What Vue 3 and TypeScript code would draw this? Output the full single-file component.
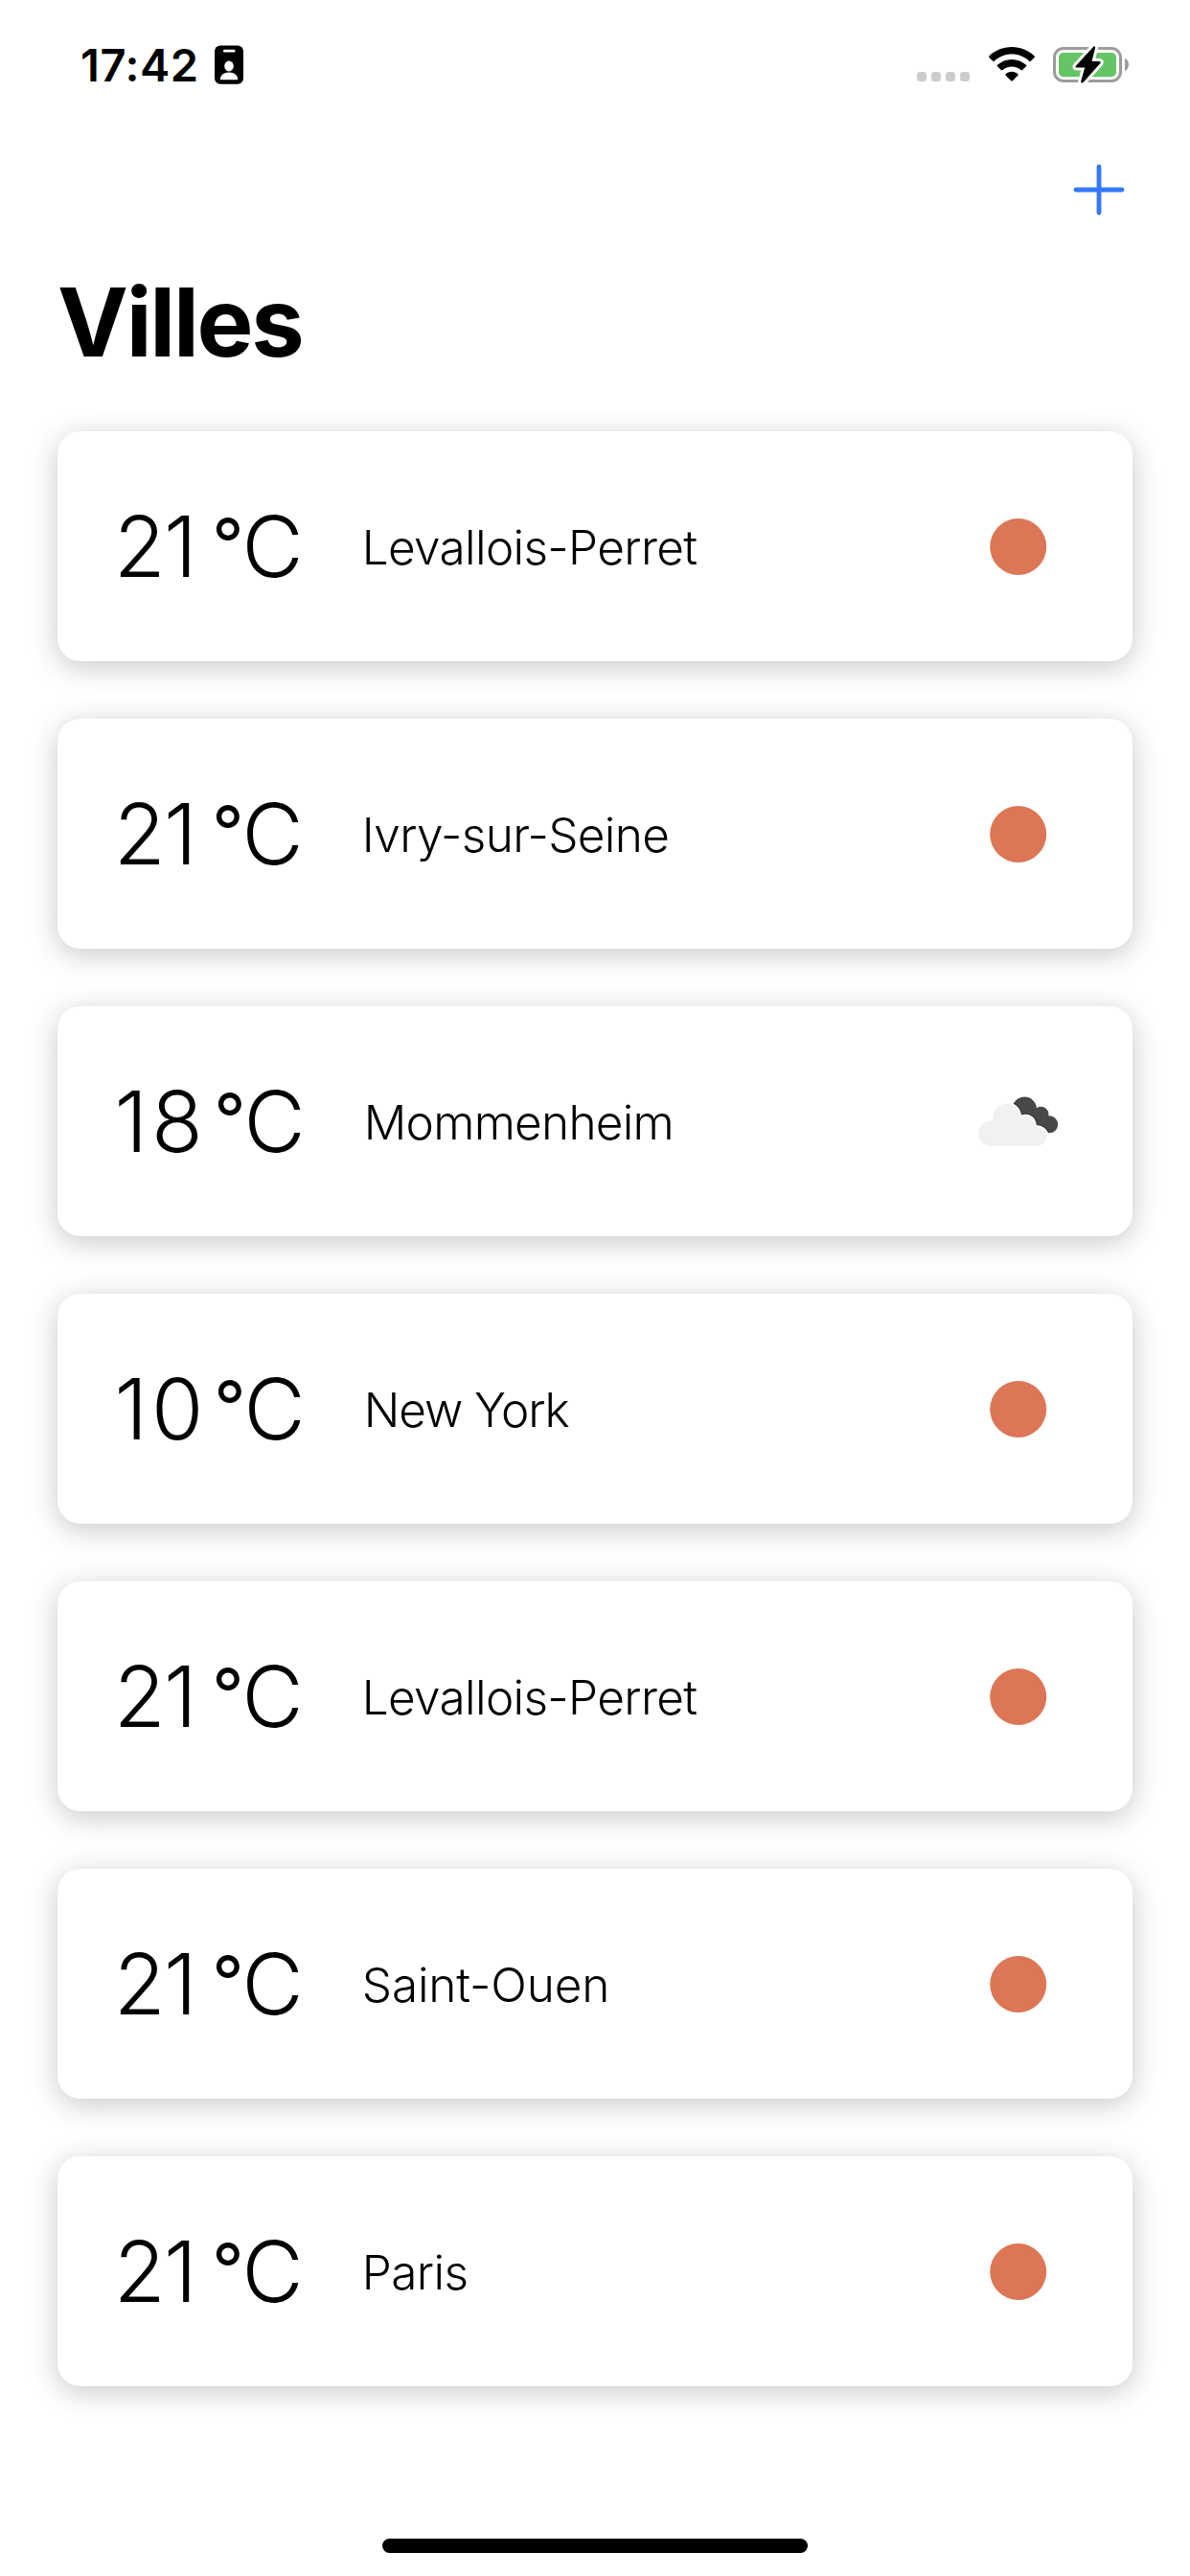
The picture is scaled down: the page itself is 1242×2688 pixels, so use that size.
<script setup lang="ts">
type Sky = 'clear' | 'clouds'

interface City {
  temp: number
  name: string
  sky: Sky
  tracking: number
}

const cities: City[] = [
  { temp: 21, name: 'Levallois-Perret', sky: 'clear', tracking: -0.66 },
  { temp: 21, name: 'Ivry-sur-Seine', sky: 'clear', tracking: -0.64 },
  { temp: 18, name: 'Mommenheim', sky: 'clouds', tracking: -0.75 },
  { temp: 10, name: 'New York', sky: 'clear', tracking: -1.1 },
  { temp: 21, name: 'Levallois-Perret', sky: 'clear', tracking: -0.66 },
  { temp: 21, name: 'Saint-Ouen', sky: 'clear', tracking: -0.15 },
  { temp: 21, name: 'Paris', sky: 'clear', tracking: -0.6 },
]

const cloud =
  'M32 85.8A13 13 0 0 1 32 59.7Q33.3 59.6 34.1 59.8C32.9 50 39.5 41.7 48.3 41.7C56 41.7 62 47.4 62.7 56C69.5 52.2 77.6 56 78 64.6V66C84.5 65.2 90.5 69.5 90.5 75.6C90.5 81.5 86 85.8 80.5 85.8Z'
</script>

<template>
  <div class="screen">
    <header class="status">
      <span class="time">17:42</span>
      <svg class="badge" width="30" height="41" viewBox="0 0 30 41">
        <rect y=".5" width="30" height="40.200" rx="6" />
        <rect x="9" y="4.800" width="12.400" height="2.800" rx="1.400" fill="#fff" />
        <ellipse cx="15" cy="22" rx="4.800" ry="5.400" fill="#fff" />
        <path d="M5.800 36.300C5.800 31.500 9.500 28.600 15 28.600S24.200 31.500 24.200 36.300Z" fill="#fff" />
      </svg>
      <div class="signal"><i /><i /><i /><i /></div>
      <svg class="wifi" width="48" height="36" viewBox="0 0 48 36">
        <path d="M24 0C33.200 0 41.600 3.600 47.600 9.400Q48.300 10.200 47.600 10.900L43.800 14.700Q43 15.400 42.200 14.700C37.500 10.200 31 7.500 24 7.500S10.500 10.200 5.800 14.700Q5 15.400 4.200 14.700L.4 10.900Q-.3 10.200 .4 9.400C6.400 3.600 14.800 0 24 0Z" />
        <path d="M24 12.900C29.700 12.900 35 15.100 39 18.700Q39.800 19.500 39 20.300L35.100 24.100Q34.300 24.800 33.500 24.100C30.900 21.800 27.600 20.500 24 20.500S17.100 21.800 14.500 24.100Q13.700 24.800 12.900 24.100L9 20.300Q8.200 19.500 9 18.700C13 15.100 18.300 12.900 24 12.900Z" />
        <path d="M24 25.800C26.500 25.800 28.800 26.700 30.500 28.200Q31.200 28.900 30.500 29.600L24.800 35.200Q24 36 23.200 35.200L17.500 29.600Q16.800 28.900 17.500 28.200C19.200 26.700 21.500 25.800 24 25.800Z" />
      </svg>
      <svg class="battery" width="80" height="41" viewBox="0 0 80 41">
        <rect x="1.500" y="3.500" width="69" height="34" rx="9.500" fill="none" stroke="#9c9c9c" stroke-width="3" />
        <rect x="6" y="8" width="60" height="25.300" rx="5" fill="#65c466" />
        <path d="M75 14C77.800 15.200 79 17.600 79 20.500S77.800 25.800 75 27Z" fill="#9c9c9c" />
        <path d="M42.200 1.700L23.800 21.800Q22.800 23.400 24.700 23.400H33.200L29.100 38.200Q29.500 40.400 31.600 38.900L49.400 18.900Q50.300 17 48.400 17H40.500L44.200 2.800Q44 .2 42.200 1.700Z" stroke="#fff" stroke-width="6" stroke-linejoin="round" paint-order="stroke" />
      </svg>
    </header>

    <nav class="toolbar">
      <svg width="54" height="54" viewBox="0 0 54 54">
        <path d="M27 3V51M3 27H51" stroke="#3478f6" stroke-width="4.800" stroke-linecap="round" />
      </svg>
    </nav>

    <h1 class="title">Villes</h1>

    <main class="list">
      <article v-for="(city, i) in cities" :key="i" class="card">
        <div class="temp">
          <span class="value" :class="{ teen: city.temp < 20 }">{{ city.temp }}</span>
          <span class="degree">°</span>
          <span class="unit">C</span>
        </div>
        <span class="name" :style="{ letterSpacing: city.tracking + 'px' }">{{ city.name }}</span>
        <svg class="icon" width="120" height="120" viewBox="0 0 120 120">
          <circle v-if="city.sky === 'clear'" cx="60.700" cy="60.500" r="29.500" fill="#dc7656" />
          <template v-else>
            <clipPath id="dark-cloud">
              <circle cx="67.300" cy="47.300" r="12.700" />
              <circle cx="84.500" cy="52.600" r="7.900" />
              <circle cx="93.200" cy="63.300" r="9" />
              <path d="M62 50L79 46L92 54L94 72L84 70Z" />
            </clipPath>
            <g clip-path="url(#dark-cloud)">
              <rect width="120" height="120" fill="#48484a" />
              <path :d="cloud" fill="none" stroke="#343436" stroke-width="6" />
            </g>
            <path :d="cloud" fill="#f1f1f1" stroke="#fff" stroke-width="3.600" paint-order="stroke" />
          </template>
        </svg>
      </article>
    </main>

    <div class="home-bar" />
  </div>
</template>

<style>
body {
  margin: 0;
  background: #fff;
}
</style>

<style scoped>
.screen {
  box-sizing: border-box;
  width: 1242px;
  height: 2688px;
  display: flex;
  flex-direction: column;
  overflow: hidden;
  background: #fff;
  color: #000;
  font-family: Inter, 'Liberation Sans', sans-serif;
}

.status {
  height: 132px;
  display: flex;
  align-items: flex-start;
  flex: none;
}

.time {
  margin: 44px 0 0 84px;
  width: 140px;
  font-size: 47px;
  line-height: 48px;
  font-weight: 600;
  letter-spacing: 0.55px;
  white-space: nowrap;
}

.badge {
  margin-top: 47px;
}

.signal {
  display: flex;
  gap: 5px;
  margin: 75px 0 0 703px;
}

.signal i {
  width: 10px;
  height: 10px;
  border-radius: 3.5px;
  background: #ccc;
}

.wifi {
  margin: 49px 0 0 19.5px;
}

.battery {
  margin: 47px 0 0 19.5px;
}

.toolbar {
  height: 132px;
  box-sizing: border-box;
  padding: 38.5px 68px 0 0;
  display: flex;
  justify-content: flex-end;
  align-items: flex-start;
  flex: none;
}

.title {
  margin: 0;
  padding: 12px 0 0 60px;
  height: 174px;
  font-size: 99px;
  line-height: 120px;
  font-weight: 700;
  letter-spacing: -2.2px;
}

.list {
  display: flex;
  flex-direction: column;
  gap: 60px;
  padding: 0 60px;
}

.card {
  height: 240px;
  box-sizing: border-box;
  padding: 0 60px;
  display: flex;
  align-items: center;
  border-radius: 24px;
  background: #fff;
  box-shadow: 0 6px 30px rgba(0, 0, 0, 0.22);
}

.temp {
  display: flex;
  font-size: 88px;
  line-height: 120px;
  font-weight: 300;
}

.value {
  width: 102.6px;
  margin-left: -1.3px;
  letter-spacing: -1.6px;
}

.value.teen {
  width: 103.9px;
  margin-left: -0.6px;
  letter-spacing: 4px;
}

.degree {
  width: 31.2px;
  font-size: 73px;
  font-weight: 400;
  transform: translateY(-2px);
}

.unit {
  width: 65.3px;
}

.name {
  flex: 1;
  margin-left: 60px;
  padding-top: 2px;
  font-size: 49.5px;
  line-height: 60px;
  font-weight: 300;
  white-space: nowrap;
}

.home-bar {
  width: 444px;
  height: 15px;
  margin: auto auto 24px 399px;
  flex: none;
  border-radius: 8px;
  background: #000;
}
</style>
